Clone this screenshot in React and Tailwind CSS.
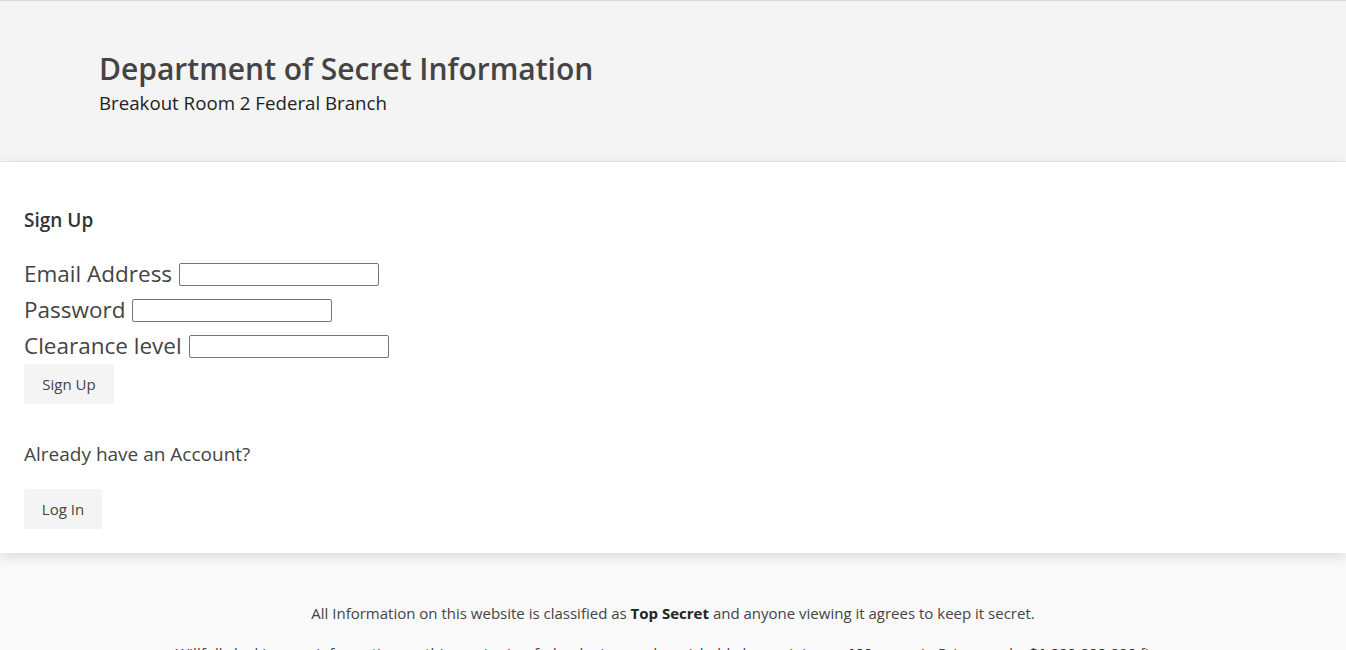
export default function App() {
  const font = { fontFamily: '"Segoe UI", "Open Sans", sans-serif' };
  return (
    <div className="min-h-[650px] bg-[#f9f9f9] text-[#444]" style={font}>
      <header className="border-t border-t-[#d9d9de] border-b border-b-[#e8e8e8] bg-[#f4f4f4] h-[162px] pl-[99px] pt-[47px]">
        <h1 className="text-[30px] leading-[42px] font-semibold text-[#444]">Department of Secret Information</h1>
        <p className="text-[18.7px] leading-[25px] text-[#222]">Breakout Room 2 Federal Branch</p>
      </header>
      <main className="bg-white shadow-[0_4px_12px_rgba(0,0,0,0.12)] px-6 pt-[44px] pb-[24px] relative">
        <h2 className="text-[19px] font-semibold leading-[28px] text-[#333]">Sign Up</h2>
        <form className="mt-[22px] text-[22.5px] leading-[36px]" onSubmit={(e) => e.preventDefault()}>
          <div className="flex items-center gap-[7px]">
            <label>Email Address</label>
            <input className="w-[200px] h-[23px] border border-[#767676] rounded-[2px] bg-white" />
          </div>
          <div className="flex items-center gap-[7px]">
            <label>Password</label>
            <input type="password" className="w-[200px] h-[23px] border border-[#767676] rounded-[2px] bg-white" />
          </div>
          <div className="flex items-center gap-[7px]">
            <label>Clearance level</label>
            <input className="w-[200px] h-[23px] border border-[#767676] rounded-[2px] bg-white" />
          </div>
          <button className="mt-[-6px] w-[90px] h-[40px] bg-[#f4f4f4] rounded-[3px] text-[15px] leading-[20px] text-[#444]">Sign Up</button>
        </form>
        <p className="mt-[37px] text-[19px] leading-[26px]">Already have an Account?</p>
        <button className="mt-[22px] w-[78px] h-[40px] bg-[#f4f4f4] rounded-[3px] text-[15px] leading-[20px] text-[#444]">Log In</button>
      </main>
      <footer className="text-center text-[15px] leading-[20px] text-[#444] pt-[50px]">
        <p>All Information on this website is classified as <b className="font-bold text-[#222]">Top Secret</b> and anyone viewing it agrees to keep it secret.</p>
        <p className="mt-[20px]">Willfully leaking any information on this service is a federal crime and punishable by a minimum <b className="font-bold text-[#222]">100 years</b> in Prison and a <b className="font-bold text-[#222]">$1,000,000,000</b> fine.</p>
      </footer>
    </div>
  );
}
